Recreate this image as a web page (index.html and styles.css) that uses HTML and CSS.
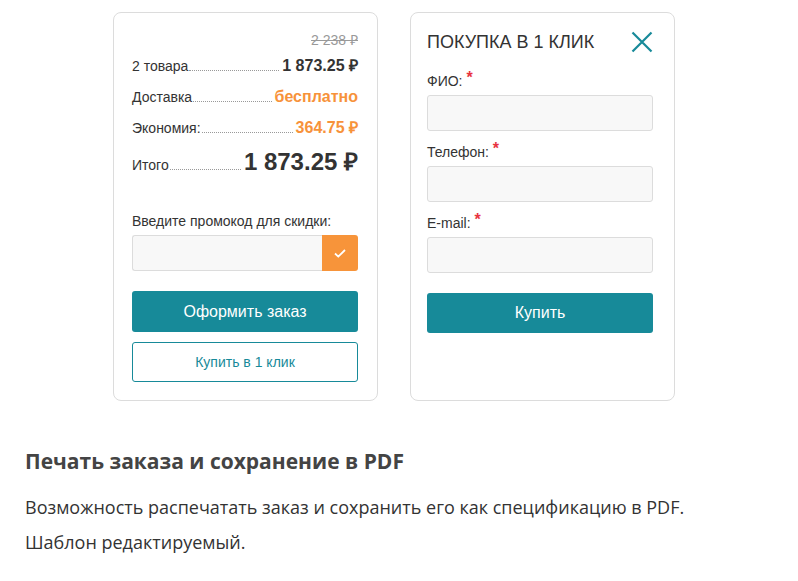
FILE: index.html
```html
<!DOCTYPE html>
<html lang="ru">
<head>
<meta charset="utf-8">
<title>Корзина</title>
<link rel="stylesheet" href="styles.css">
</head>
<body>
<div class="cards">
  <div class="card card-order">
    <div class="old-price">2 238 ₽</div>
    <div class="row row-first">
      <span class="label">2 товара</span><span class="leader"></span><span class="value">1 873.25 ₽</span>
    </div>
    <div class="row">
      <span class="label">Доставка</span><span class="leader"></span><span class="value accent">бесплатно</span>
    </div>
    <div class="row">
      <span class="label">Экономия:</span><span class="leader"></span><span class="value accent">364.75 ₽</span>
    </div>
    <div class="row row-total">
      <span class="label">Итого</span><span class="leader"></span><span class="value total">1 873.25 ₽</span>
    </div>
    <div class="promo-label">Введите промокод для скидки:</div>
    <div class="promo">
      <div class="promo-input"></div>
      <div class="promo-btn">
        <svg width="12" height="9" viewBox="0 0 12 9"><path d="M1 4.5 L4.3 7.6 L11 1" fill="none" stroke="#fff" stroke-width="1.8"/></svg>
      </div>
    </div>
    <div class="btn btn-primary btn-order">Оформить заказ</div>
    <div class="btn btn-outline">Купить в 1 клик</div>
  </div>
  <div class="card card-quick">
    <div class="quick-head">
      <div class="quick-title">ПОКУПКА В 1 КЛИК</div>
      <svg class="close" width="22" height="22" viewBox="0 0 22 22"><path d="M1.5 1.5 L20.5 20.5 M20.5 1.5 L1.5 20.5" stroke="#178a99" stroke-width="2.2" fill="none"/></svg>
    </div>
    <div class="field field-first">
      <div class="field-label">ФИО: <span class="req">*</span></div>
      <div class="field-input"></div>
    </div>
    <div class="field">
      <div class="field-label">Телефон: <span class="req">*</span></div>
      <div class="field-input"></div>
    </div>
    <div class="field">
      <div class="field-label">E-mail: <span class="req">*</span></div>
      <div class="field-input"></div>
    </div>
    <div class="btn btn-primary btn-buy">Купить</div>
  </div>
</div>
<div class="feature">
  <h2 class="feature-title">Печать заказа и сохранение в PDF</h2>
  <p class="feature-text">Возможность распечатать заказ и сохранить его как спецификацию в PDF.<br>Шаблон редактируемый.</p>
</div>
</body>
</html>
```
FILE: styles.css
```css
* { box-sizing: border-box; }
body {
  margin: 0;
  background: #fff;
  font-family: "Liberation Sans", Arial, sans-serif;
  color: #333;
}
.cards {
  display: flex;
  gap: 32px;
  padding: 12px 0 0 113px;
}
.card {
  width: 265px;
  height: 389px;
  border: 1px solid #dcdcdc;
  border-radius: 8px;
  background: #fff;
}
.card-order {
  padding: 17px 19px 0 18px;
}
.old-price {
  text-align: right;
  font-size: 14px;
  line-height: 20px;
  color: #999;
  text-decoration: line-through;
}
.row {
  display: flex;
  align-items: baseline;
  margin-top: 11px;
  line-height: 20px;
}
.row-first { margin-top: 6px; }
.label {
  font-size: 14px;
  color: #333;
}
.leader {
  flex: 1;
  height: 0;
  border-bottom: 1px dotted #999;
  margin: 0 3px 0 1px;
}
.value {
  font-size: 16px;
  font-weight: bold;
  color: #333;
}
.accent { color: #f7923a; }
.row-total { margin-top: 10px; line-height: 28px; }
.total { font-size: 24px; }
.promo-label {
  margin-top: 32px;
  font-size: 14px;
  line-height: 20px;
  color: #333;
}
.promo {
  display: flex;
  margin-top: 4px;
  height: 36px;
}
.promo-input {
  flex: 1;
  background: #f8f8f8;
  border: 1px solid #dcdcdc;
  border-right: 0;
  border-radius: 3px 0 0 3px;
}
.promo-btn {
  width: 36px;
  background: #f7943a;
  border-radius: 0 3px 3px 0;
  display: flex;
  align-items: center;
  justify-content: center;
}
.btn {
  display: flex;
  align-items: center;
  justify-content: center;
  border-radius: 3px;
  font-size: 16px;
}
.btn-primary {
  background: #178a99;
  color: #fff;
}
.btn-order {
  margin-top: 20px;
  height: 41px;
}
.btn-outline {
  margin-top: 10px;
  height: 40px;
  border: 1px solid #178a99;
  color: #178a99;
  font-size: 14px;
}
.card-quick {
  padding: 16px 21px 0 16px;
}
.quick-head {
  display: flex;
  justify-content: space-between;
  align-items: center;
  height: 24px;
  margin-top: 1px;
}
.quick-title {
  font-size: 18px;
  line-height: 24px;
  color: #333;
}
.field { margin-top: 11px; }
.field-first { margin-top: 17px; }
.field-label {
  font-size: 14px;
  line-height: 20px;
  color: #333;
  margin-bottom: 4px;
}
.req {
  color: #e8343f;
  font-size: 16px;
  font-weight: bold;
  position: relative;
  top: -3px;
}
.field-input {
  height: 36px;
  background: #f8f8f8;
  border: 1px solid #dcdcdc;
  border-radius: 3px;
}
.btn-buy {
  margin-top: 20px;
  height: 40px;
}
.feature {
  padding: 46px 0 0 25px;
  font-family: "Open Sans", sans-serif;
}
.feature-title {
  margin: 0;
  font-size: 21px;
  line-height: 28px;
  font-weight: bold;
  color: #444;
}
.feature-text {
  margin: 15px 0 0;
  font-size: 18px;
  line-height: 35px;
  color: #333;
}
```
